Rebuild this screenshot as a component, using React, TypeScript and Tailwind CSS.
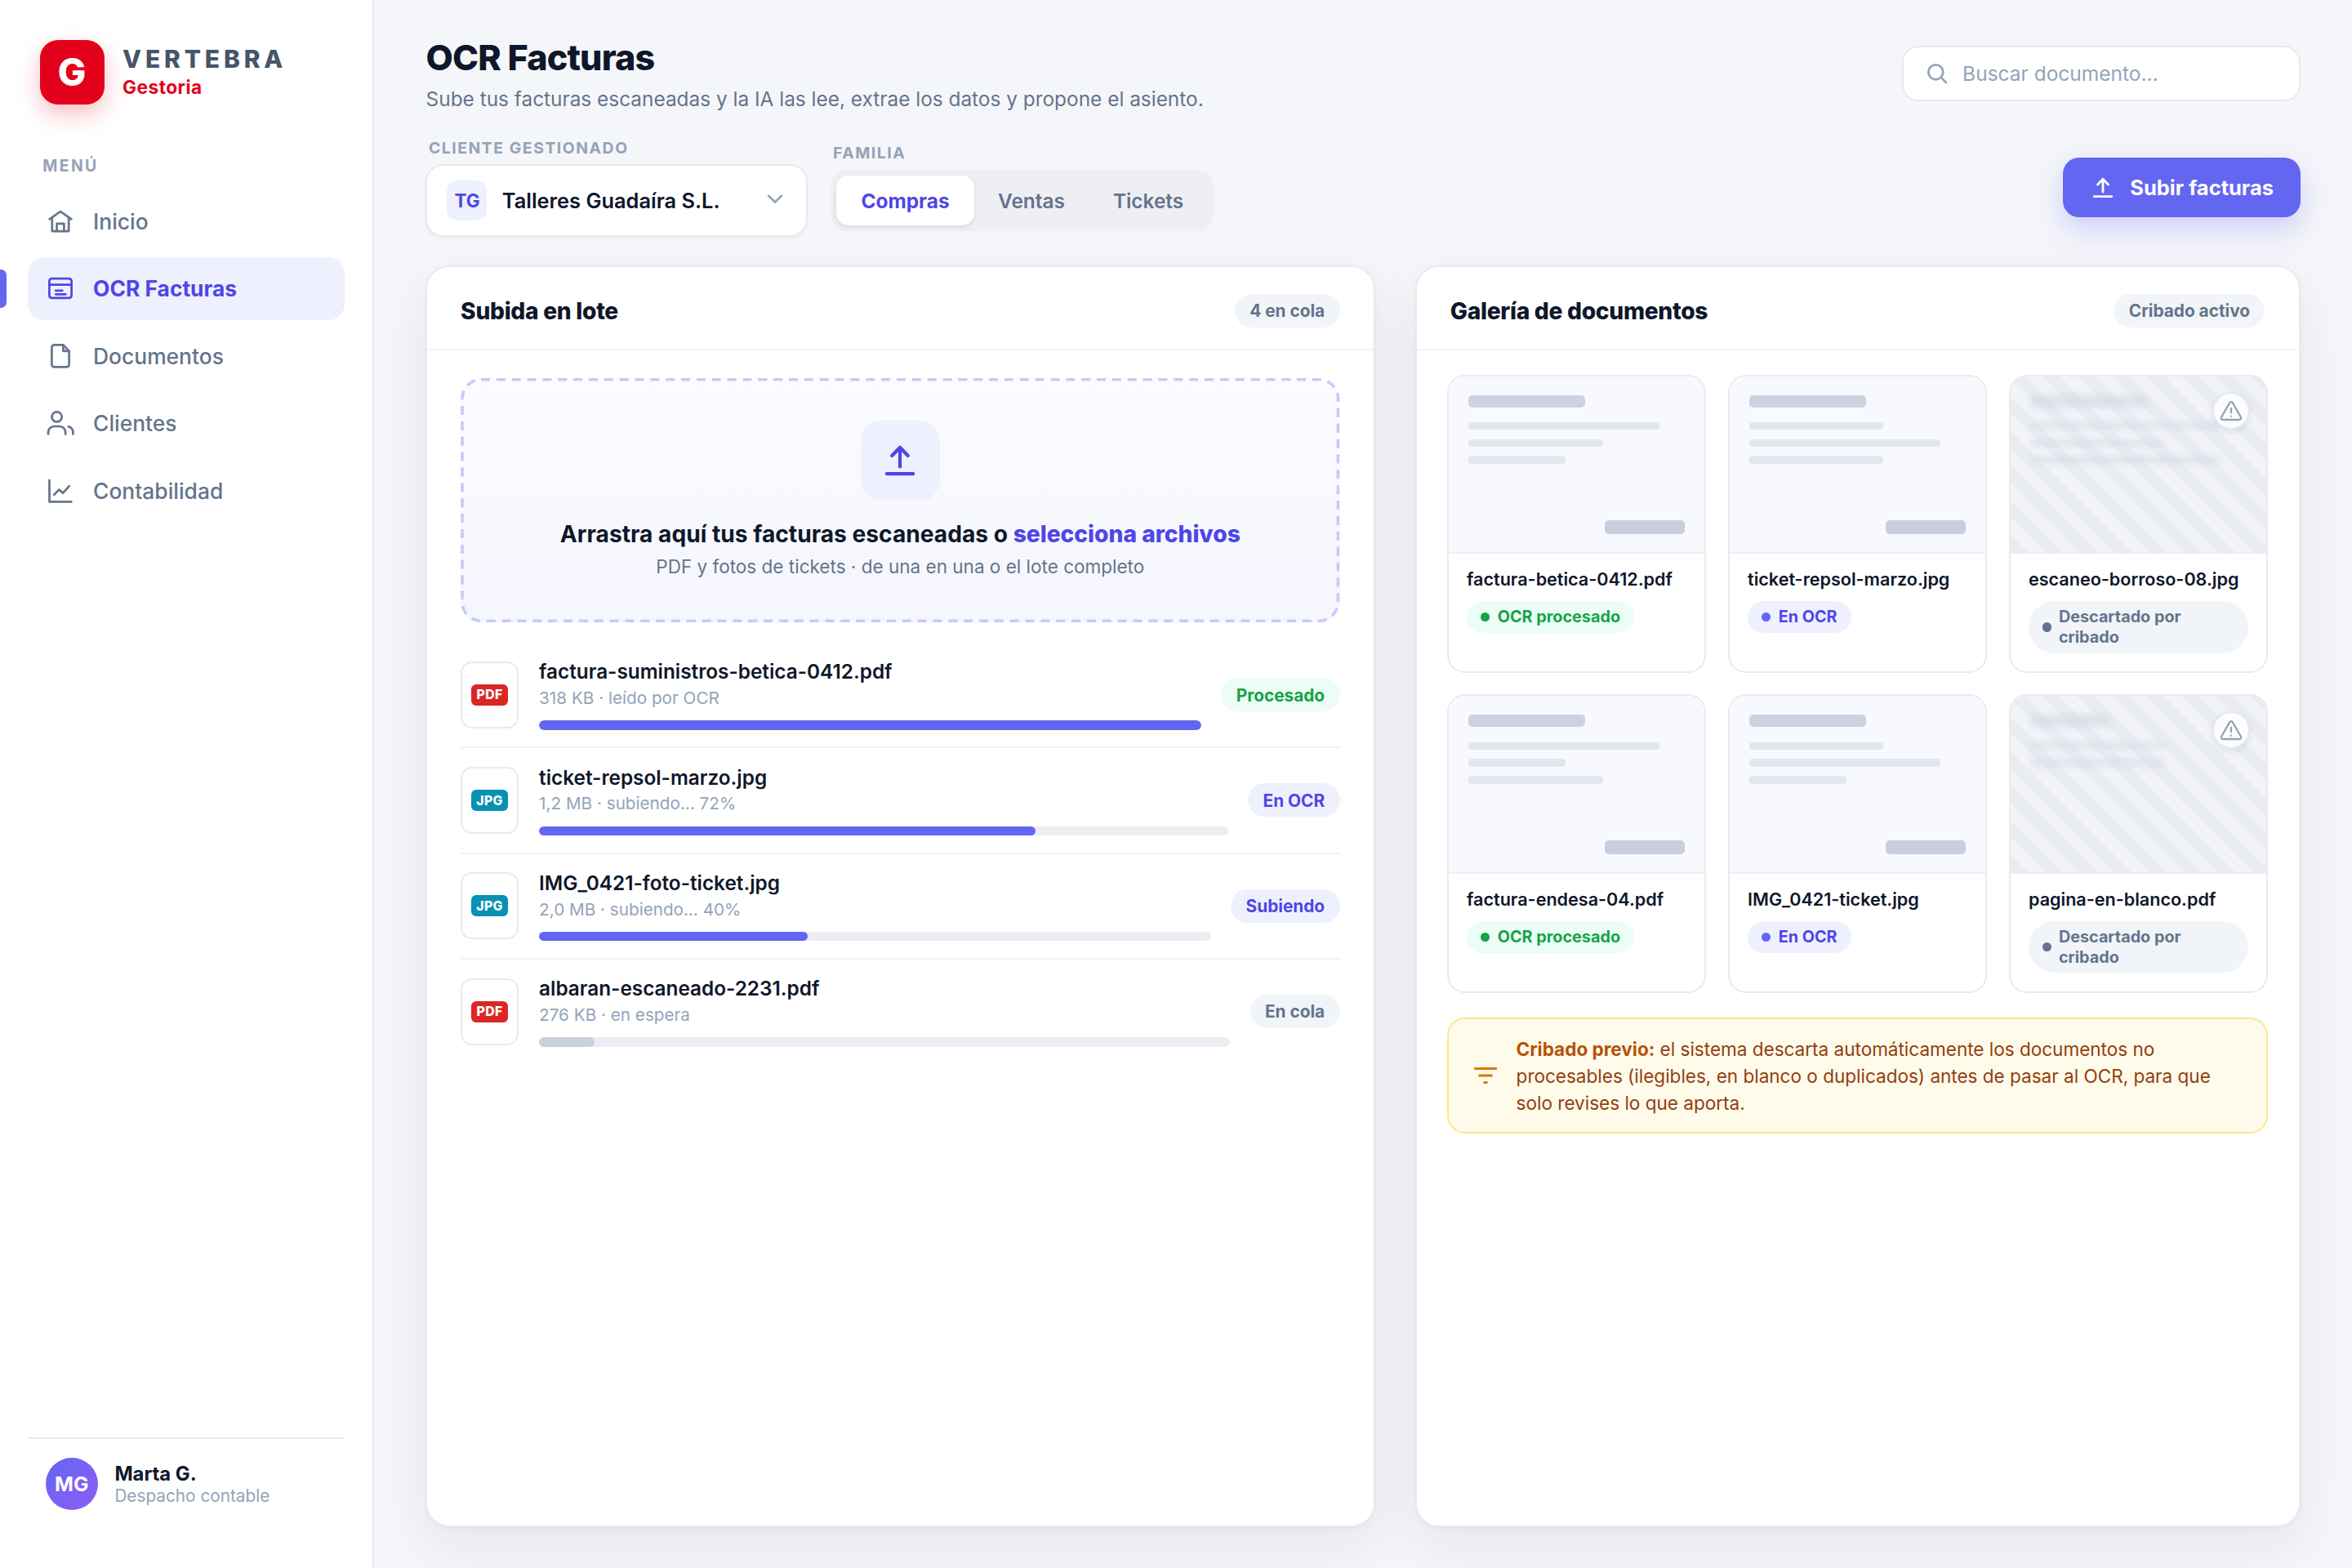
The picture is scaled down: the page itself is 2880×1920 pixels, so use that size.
import type { ReactNode } from "react";

type IconProps = {
    className?: string;
};

function StrokeIcon({ box, className, children, width }: IconProps & { box: number; width: number; children: ReactNode }) {
    return (
        <svg
            viewBox={`0 0 ${box} ${box}`}
            fill="none"
            stroke="currentColor"
            strokeWidth={width}
            strokeLinecap="round"
            strokeLinejoin="round"
            className={`shrink-0 ${className ?? ""}`}
        >
            {children}
        </svg>
    );
}

function HomeIcon({ className }: IconProps) {
    return (
        <StrokeIcon box={36} width={2.7} className={className}>
            <path d="M4.6 15.3 18 6l13.4 9.3" />
            <path d="M7.8 13.6v16.5h20.4V13.6" />
            <path d="M13.6 30.1v-9.3h8.8v9.3" />
        </StrokeIcon>
    );
}

function InvoiceIcon({ className }: IconProps) {
    return (
        <StrokeIcon box={36} width={2.7} className={className}>
            <rect x="4.4" y="6.2" width="27.2" height="23.6" rx="3" />
            <path d="M4.4 13.6h27.2M12.2 20.8h8.2M12.2 25.3h12.2" />
        </StrokeIcon>
    );
}

function DocumentIcon({ className }: IconProps) {
    return (
        <StrokeIcon box={36} width={2.7} className={className}>
            <path d="M21.4 4.4h-11a3 3 0 0 0-3 3v20.9a3 3 0 0 0 3 3h15.2a3 3 0 0 0 3-3V11.9z" />
            <path d="M21.4 4.4v7.5h7.2" />
        </StrokeIcon>
    );
}

function ClientsIcon({ className }: IconProps) {
    return (
        <StrokeIcon box={36} width={2.7} className={className}>
            <circle cx="13.6" cy="10.4" r="6.1" />
            <path d="M3 31.6v-2.2a7.4 7.4 0 0 1 7.4-7.4h6.4a7.4 7.4 0 0 1 7.4 7.4v2.2" />
            <path d="M27.8 22.4a7 7 0 0 1 5.6 7v2.2" />
        </StrokeIcon>
    );
}

function ChartIcon({ className }: IconProps) {
    return (
        <StrokeIcon box={36} width={2.7} className={className}>
            <path d="M4.5 5v26.4h26.8" />
            <path d="m10.3 22.8 6-6.2 4.9 4 7.6-8.4" />
        </StrokeIcon>
    );
}

function UploadIcon({ className }: IconProps) {
    return (
        <StrokeIcon box={28} width={2.8} className={className}>
            <path d="M14 19V3.2M7.5 10 14 3.2l6.5 6.8M3.2 24.7h21.6" />
        </StrokeIcon>
    );
}

function SearchIcon({ className }: IconProps) {
    return (
        <StrokeIcon box={28} width={2.7} className={className}>
            <circle cx="12.3" cy="12.3" r="9" />
            <path d="m19 19 5.9 6" />
        </StrokeIcon>
    );
}

function ChevronIcon({ className }: IconProps) {
    return (
        <StrokeIcon box={24} width={2.4} className={className}>
            <path d="m4.7 8.1 7.3 7.1 7.3-7.1" />
        </StrokeIcon>
    );
}

function WarningIcon({ className }: IconProps) {
    return (
        <StrokeIcon box={30} width={2.3} className={className}>
            <path d="M13.2 5.1 3 23a2 2 0 0 0 1.8 3h20.4A2 2 0 0 0 27 23L16.8 5.1a2.1 2.1 0 0 0-3.6 0z" />
            <path d="M15 11.8v5.4M15 21.6v.1" />
        </StrokeIcon>
    );
}

function FilterIcon({ className }: IconProps) {
    return (
        <StrokeIcon box={32} width={3} className={className}>
            <path d="M3.2 7.6h25.6M8.6 16h14.8M14.6 24.6h2.8" />
        </StrokeIcon>
    );
}

type Tone = "green" | "indigo" | "slate";

const toneClasses: Record<Tone, string> = {
    green: "bg-[#ecfdf5] text-[#16a34a]",
    indigo: "bg-[#eef0fe] text-[#4f46e5]",
    slate: "bg-[#f1f5f9] text-[#64748b]",
};

const dotClasses: Record<Tone, string> = {
    green: "bg-[#16a34a]",
    indigo: "bg-[#6366f1]",
    slate: "bg-[#64748b]",
};

function Pill({ tone, children }: { tone: Tone; children: ReactNode }) {
    return (
        <span className={`flex h-[41px] shrink-0 items-center rounded-full px-[18.4px] pt-px text-[20.8px] font-bold ${toneClasses[tone]}`}>
            {children}
        </span>
    );
}

const menu = [
    { label: "Inicio", icon: HomeIcon },
    { label: "OCR Facturas", icon: InvoiceIcon, active: true },
    { label: "Documentos", icon: DocumentIcon },
    { label: "Clientes", icon: ClientsIcon },
    { label: "Contabilidad", icon: ChartIcon },
];

function Sidebar() {
    return (
        <aside className="flex w-[457.5px] shrink-0 flex-col border-r-2 border-[#e9eaf0] bg-white px-[33.8px] pt-[48.5px]">
            <div className="flex items-center gap-[22.5px] pl-[14.8px]">
                <div className="flex size-[79px] items-center justify-center rounded-[22px] bg-[#e3001b] text-[46px] font-extrabold text-white shadow-[0_12px_28px_rgba(227,0,27,0.25)]">
                    G
                </div>
                <div className="pt-[2.5px]">
                    <p className="text-[29.9px] leading-[35px] font-extrabold tracking-[0.163em] text-[#475569]">VERTEBRA</p>
                    <p className="-mt-px text-[22.7px] leading-[35px] font-bold tracking-[0.02em] text-[#e3001b]">Gestoria</p>
                </div>
            </div>
            <p className="mt-[62px] pl-[18.4px] text-[19.4px] leading-[26px] font-bold tracking-[0.125em] text-[#94a3b8]">MENÚ</p>
            <nav className="mt-[17px] flex flex-col gap-[5.7px]">
                {menu.map(({ label, icon: Icon, active }) => (
                    <div
                        key={label}
                        className={`relative flex h-[76.8px] items-center gap-[22.1px] rounded-[20px] pl-[22.2px] text-[26.4px] ${active ? "bg-[#eef0fe] font-bold text-[#4f46e5]" : "font-medium text-[#64748b]"}`}
                    >
                        {active && <span className="absolute top-[15px] -left-[34px] h-[47px] w-[8px] rounded-r-[7px] bg-[#6366f1]" />}
                        <Icon className="size-9" />
                        <span className="pt-[1.5px]">{label}</span>
                    </div>
                ))}
            </nav>
            <div className="mt-auto flex h-[160px] gap-[20.6px] border-t-2 border-[#e9eaf0] pt-[22.6px] pl-[22px]">
                <div className="flex size-16 items-center justify-center rounded-full bg-linear-135 from-[#6366f1] to-[#8b5cf6] pt-[2px] text-[24.6px] font-bold text-white">
                    MG
                </div>
                <div className="pt-[5px]">
                    <p className="text-[23.8px] leading-[29px] font-bold text-[#0f172a]">Marta G.</p>
                    <p className="mt-[0.5px] text-[20.75px] leading-[26px] text-[#94a3b8]">Despacho contable</p>
                </div>
            </div>
        </aside>
    );
}

function Header() {
    return (
        <header className="flex h-[99.6px] items-center justify-between">
            <div className="pt-[2.2px] pl-[0.7px]">
                <h1 className="text-[43.1px] leading-[52px] font-extrabold tracking-[-0.02em] text-[#0f172a]">OCR Facturas</h1>
                <p className="mt-[7.8px] text-[24.4px] leading-[34px] text-[#64748b]">
                    Sube tus facturas escaneadas y la IA las lee, extrae los datos y propone el asiento.
                </p>
            </div>
            <div className="flex h-[67.6px] w-[487.5px] items-center gap-[17px] rounded-[20px] border-2 border-[#e9eaf0] bg-white pl-[27px] text-[24.5px] text-[#94a3b8]">
                <SearchIcon className="size-[28px]" />
                <span className="pt-[2px]">Buscar documento…</span>
            </div>
        </header>
    );
}

function Toolbar() {
    return (
        <div className="mt-[30px] flex h-[120px] items-center">
            <div>
                <p className="mb-[8.2px] pl-[4px] text-[19.36px] leading-[23.3px] font-bold tracking-[0.08em] text-[#94a3b8]">CLIENTE GESTIONADO</p>
                <div className="flex h-[88.5px] w-[468px] items-center rounded-[22px] border-2 border-[#e9eaf0] bg-white pl-[24.6px] shadow-[0_2px_4px_rgba(15,23,42,0.05)]">
                    <span className="flex size-[49px] items-center justify-center rounded-[13px] bg-[#eef0fe] pt-[2px] text-[22.5px] font-bold text-[#4f46e5]">TG</span>
                    <span className="ml-[18.3px] pt-[2px] text-[25.4px] font-semibold text-[#0f172a]">Talleres Guadaíra S.L.</span>
                    <ChevronIcon className="mr-[25px] mb-[2px] ml-auto size-[26px] text-[#94a3b8]" />
                </div>
            </div>
            <div className="ml-[28.3px]">
                <p className="mb-[8.2px] pl-[2.8px] text-[19.36px] leading-[23.3px] font-bold tracking-[0.08em] text-[#94a3b8]">FAMILIA</p>
                <div className="flex h-[75.5px] rounded-[20px] bg-[#eeeff3] p-[7.3px] text-[24.4px] font-semibold text-[#64748b]">
                    <span className="flex items-center rounded-[15px] bg-white px-[30px] pt-[2px] font-bold text-[#4f46e5] shadow-[0_2px_5px_rgba(15,23,42,0.1)]">Compras</span>
                    <span className="flex items-center px-[29.5px] pt-[2px]">Ventas</span>
                    <span className="flex items-center px-[29.5px] pt-[2px]">Tickets</span>
                </div>
            </div>
            <button className="ml-auto flex h-[73.6px] w-[291px] items-center gap-[19px] rounded-[20px] bg-[#6366f1] pl-[35.6px] text-[25.5px] font-bold whitespace-nowrap text-white shadow-[0_14px_36px_rgba(99,102,241,0.28)]">
                <UploadIcon className="size-[28px]" />
                <span className="pt-[2px]">Subir facturas</span>
            </button>
        </div>
    );
}

type Upload = {
    name: string;
    info: string;
    kind: "PDF" | "JPG";
    status: string;
    tone: Tone;
    progress: number;
};

const uploads: Upload[] = [
    { name: "factura-suministros-betica-0412.pdf", info: "318 KB · leído por OCR", kind: "PDF", status: "Procesado", tone: "green", progress: 100 },
    { name: "ticket-repsol-marzo.jpg", info: "1,2 MB · subiendo… 72%", kind: "JPG", status: "En OCR", tone: "indigo", progress: 72 },
    { name: "IMG_0421-foto-ticket.jpg", info: "2,0 MB · subiendo… 40%", kind: "JPG", status: "Subiendo", tone: "indigo", progress: 40 },
    { name: "albaran-escaneado-2231.pdf", info: "276 KB · en espera", kind: "PDF", status: "En cola", tone: "slate", progress: 8 },
];

function UploadRow({ upload }: { upload: Upload }) {
    return (
        <li className="flex h-[129.3px] items-center border-b-2 border-[#f1f2f7] last:border-transparent">
            <div className="flex h-[82px] w-[71px] shrink-0 items-center justify-center rounded-[14px] border-2 border-[#e9eaf0] bg-white">
                <span className={`flex h-[26px] w-[45px] items-center justify-center rounded-[6px] pt-px text-[15.8px] font-extrabold tracking-[0.02em] text-white ${upload.kind === "PDF" ? "bg-[#dc2626]" : "bg-[#0891b2]"}`}>
                    {upload.kind}
                </span>
            </div>
            <div className="mr-[24.4px] ml-[25px] min-w-0 flex-1">
                <p className="text-[24.33px] leading-[30px] font-semibold text-[#0f172a]">{upload.name}</p>
                <p className="mt-[4.5px] text-[20.7px] leading-[26px] text-[#94a3b8]">{upload.info}</p>
                <div className="mt-[14.5px] h-[11.3px] overflow-hidden rounded-full bg-[#ecedf2]">
                    <div
                        className={`h-full rounded-full ${upload.tone === "slate" ? "bg-[#cbd0dd]" : "bg-[#6366f1]"}`}
                        style={{ width: `${upload.progress}%` }}
                    />
                </div>
            </div>
            <Pill tone={upload.tone}>{upload.status}</Pill>
        </li>
    );
}

function Card({ title, badge, className, children }: { title: string; badge: string; className: string; children: ReactNode }) {
    return (
        <section className={`flex flex-col rounded-[29px] border-2 border-[#e9eaf0] bg-white shadow-[0_2px_4px_rgba(15,23,42,0.04),0_25px_70px_rgba(15,23,42,0.07)] ${className}`}>
            <div className="flex h-[102px] items-center justify-between border-b-2 border-[#f1f2f7] px-[41.2px] pt-[7px]">
                <h2 className="pt-[3px] text-[28.16px] font-extrabold tracking-[-0.01em] text-[#0f172a]">{title}</h2>
                <Pill tone="slate">{badge}</Pill>
            </div>
            {children}
        </section>
    );
}

function DashedOutline() {
    return (
        <svg viewBox="0 0 1076 299" className="absolute inset-0 size-full" fill="none">
            <rect x="1.8" y="1.8" width="1072.4" height="295.4" rx="23" stroke="#c7caf8" strokeWidth="3.6" strokeDasharray="11 7.85" />
        </svg>
    );
}

function UploadCard() {
    return (
        <Card title="Subida en lote" badge="4 en cola" className="w-[1162.8px]">
            <div className="px-[41.2px] pt-[34px]">
                <div className="relative flex h-[299px] flex-col items-center rounded-[25px] bg-linear-to-b from-[#fbfcff] to-[#f5f6fe] pt-[52.5px]">
                    <DashedOutline />
                    <div className="flex size-[97.5px] items-center justify-center rounded-[25px] bg-[#eef0fe] text-[#4f46e5]">
                        <UploadIcon className="size-[42px]" />
                    </div>
                    <p className="mt-[24px] text-[28.16px] leading-[34px] font-bold text-[#0f172a]">
                        Arrastra aquí tus facturas escaneadas o <span className="font-extrabold text-[#4f46e5]">selecciona archivos</span>
                    </p>
                    <p className="mt-[9.6px] text-[22.52px] leading-[28px] text-[#64748b]">PDF y fotos de tickets · de una en una o el lote completo</p>
                </div>
                <ul className="mt-[25.4px]">
                    {uploads.map((upload) => (
                        <UploadRow key={upload.name} upload={upload} />
                    ))}
                </ul>
            </div>
        </Card>
    );
}

type GalleryDoc = {
    name: string;
    status: string;
    tone: Tone;
    heading?: number;
    lines: number[];
};

const docs: GalleryDoc[] = [
    { name: "factura-betica-0412.pdf", status: "OCR procesado", tone: "green", lines: [88, 62, 45] },
    { name: "ticket-repsol-marzo.jpg", status: "En OCR", tone: "indigo", lines: [62, 88, 62] },
    { name: "escaneo-borroso-08.jpg", status: "Descartado por cribado", tone: "slate", lines: [88, 62, 88] },
    { name: "factura-endesa-04.pdf", status: "OCR procesado", tone: "green", lines: [88, 45, 62] },
    { name: "IMG_0421-ticket.jpg", status: "En OCR", tone: "indigo", lines: [62, 88, 45] },
    { name: "pagina-en-blanco.pdf", status: "Descartado por cribado", tone: "slate", heading: 37, lines: [62, 62] },
];

function DocPreview({ doc }: { doc: GalleryDoc }) {
    const discarded = doc.tone === "slate";

    return (
        <div className={`relative h-[217.6px] border-b-2 border-[#eeeff4] px-[23.7px] pt-[23px] ${discarded ? "bg-[repeating-linear-gradient(45deg,#e9ecf1_0_15px,#f2f3f8_15px_30px)]" : "bg-[#f8f9fe]"}`}>
            <div className={discarded ? "opacity-50 blur-[3.5px]" : ""}>
                <div className="h-[15px] rounded-[5px] bg-[#cdd2e1]" style={{ width: `${doc.heading ?? 54}%` }} />
                <div className="mt-[18.3px] flex flex-col gap-[11.1px]">
                    {doc.lines.map((width, index) => (
                        <div key={index} className={`h-[9.6px] rounded-[4px] ${discarded ? "bg-[#d3d7e4]" : "bg-[#e2e7ef]"}`} style={{ width: `${width}%` }} />
                    ))}
                </div>
            </div>
            {discarded ? (
                <span className="absolute top-[19px] right-[20.3px] flex size-[46px] items-center justify-center rounded-full border-2 border-[#e2e8f0] bg-white/85 text-[#94a3b8] shadow-[0_3px_8px_rgba(15,23,42,0.08)]">
                    <WarningIcon className="size-[30px]" />
                </span>
            ) : (
                <span className="absolute right-[24.4px] bottom-[22.4px] h-[17px] w-[97.5px] rounded-[5px] bg-[#c9cedd]" />
            )}
        </div>
    );
}

function GalleryTile({ doc }: { doc: GalleryDoc }) {
    return (
        <div className="h-[365.3px] overflow-hidden rounded-[22px] border-2 border-[#e9eaf0] bg-white">
            <DocPreview doc={doc} />
            <div className="px-[22px] pt-[17px]">
                <p className="text-[21.57px] leading-[28px] font-semibold whitespace-nowrap text-[#0f172a]">{doc.name}</p>
                <div className={`mt-[13px] flex w-fit items-center gap-[9.3px] rounded-[32px] px-[17px] py-[7.3px] text-[19.8px] leading-[24.4px] font-bold ${toneClasses[doc.tone]}`}>
                    <span className={`h-[11.3px] w-[11.3px] rounded-full ${dotClasses[doc.tone]}`} />
                    {doc.status}
                </div>
            </div>
        </div>
    );
}

function GalleryCard() {
    return (
        <Card title="Galería de documentos" badge="Cribado activo" className="w-[1084px]">
            <div className="px-[37.5px] pt-[30px]">
                <div className="grid grid-cols-3 gap-x-[26.8px] gap-y-[26.5px]">
                    {docs.map((doc) => (
                        <GalleryTile key={doc.name} doc={doc} />
                    ))}
                </div>
                <div className="mt-[30.5px] flex h-[142.3px] items-center gap-[22px] rounded-[22px] border-2 border-[#fde68a] bg-[#fffbeb] pl-[28.5px]">
                    <FilterIcon className="size-8 text-[#d97706]" />
                    <p className="w-[880px] pt-px text-[22.53px] leading-[33px] text-[#92400e]">
                        <b className="font-bold text-[#b45309]">Cribado previo:</b> el sistema descarta automáticamente los documentos no procesables (ilegibles, en blanco o
                        duplicados) antes de pasar al OCR, para que solo revises lo que aporta.
                    </p>
                </div>
            </div>
        </Card>
    );
}

export default function App() {
    return (
        <div className="flex h-[1920px] w-[2880px] overflow-hidden bg-[#f5f6fa] font-[Inter,sans-serif]">
            <Sidebar />
            <main className="flex flex-1 flex-col px-[63.4px] pt-[40px]">
                <Header />
                <Toolbar />
                <div className="mt-[35px] flex h-[1545.5px] justify-between">
                    <UploadCard />
                    <GalleryCard />
                </div>
            </main>
        </div>
    );
}
